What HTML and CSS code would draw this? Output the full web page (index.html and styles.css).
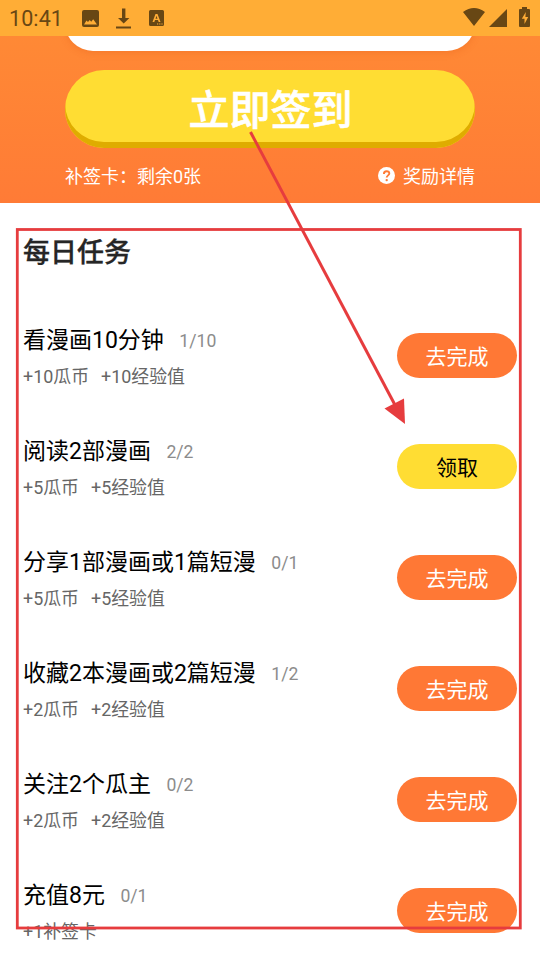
FILE: index.html
```html
<!DOCTYPE html>
<html lang="zh-CN">
<head>
<meta charset="utf-8">
<title>每日任务</title>
<link rel="stylesheet" href="styles.css">
</head>
<body>
<div class="screen">
  <header class="status">
    <span class="time">10:41</span>
    <svg class="status-icons" width="80" height="36" viewBox="0 0 80 36">
      <path fill-rule="evenodd" d="M4 10h13q2 0 2 2v13q0 2-2 2H4q-2 0-2-2V12q0-2 2-2zM4 24.500h13l-3.800-5.200-2 2.400-1.500-1.700-1.700 2-1.500-1.500z"/>
      <path d="M42 8.500h3.400V18h4L43.700 23.500 38 18h4zM36 26.500h15v2H36z"/>
    </svg>
    <svg class="app-icon" width="15" height="36" viewBox="0 0 15 36">
      <path fill-rule="evenodd" d="M1.500 10h12q1.500 0 1.500 1.500v13q0 1.500-1.500 1.500h-12q-1.500 0-1.500-1.500v-13q0-1.500 1.500-1.500zM6.500 14 3.500 22h1.800l.7-2h3l.7 2h1.800l-3-8zM7.500 15.800l1 2.900h-2zM8 23.500v1h1.200v-1zM10.200 23.500v1h1.200v-1zM12.400 23.500v1h1.200v-1z"/>
    </svg>
    <svg class="system-icons" width="70" height="36" viewBox="0 0 70 36">
      <path d="M0 12Q11 4 22 12L11 26zM44 9v18H26z"/>
      <path fill-rule="evenodd" d="M59 7h5v2h2q1 0 1 1v16q0 1-1 1h-9q-1 0-1-1V10q0-1 1-1h2zM62.800 12l-4 6.800h2.700V24l3.700-7h-2.800z"/>
    </svg>
  </header>
  <section class="hero">
    <div class="calendar-end"></div>
    <div class="sign-button">立即签到</div>
    <div class="hero-info">
      <span>补签卡：剩余0张</span>
      <span class="reward">
        <svg width="18" height="18" viewBox="0 0 18 18"><circle cx="8.500" cy="8.500" r="8.500" fill="#fff"/><path d="M5.900 6.900Q5.900 4.200 8.600 4.200t2.700 2.400c0 1.700-2.600 1.900-2.600 3.900" fill="none" stroke="#ff7b36" stroke-width="1.900"/><circle cx="8.700" cy="13.100" r="1.200" fill="#ff7b36"/></svg>
        奖励详情
      </span>
    </div>
  </section>
  <main class="tasks">
    <h1>每日任务</h1>
    <div class="task"><div><div class="name">看漫画10分钟<span class="count">1/10</span></div><div class="gain"><span>+10瓜币</span><span>+10经验值</span></div></div><div class="action">去完成</div></div>
    <div class="task"><div><div class="name">阅读2部漫画<span class="count">2/2</span></div><div class="gain"><span>+5瓜币</span><span>+5经验值</span></div></div><div class="action claim">领取</div></div>
    <div class="task"><div><div class="name">分享1部漫画或1篇短漫<span class="count">0/1</span></div><div class="gain"><span>+5瓜币</span><span>+5经验值</span></div></div><div class="action">去完成</div></div>
    <div class="task"><div><div class="name">收藏2本漫画或2篇短漫<span class="count">1/2</span></div><div class="gain"><span>+2瓜币</span><span>+2经验值</span></div></div><div class="action">去完成</div></div>
    <div class="task"><div><div class="name">关注2个瓜主<span class="count">0/2</span></div><div class="gain"><span>+2瓜币</span><span>+2经验值</span></div></div><div class="action">去完成</div></div>
    <div class="task"><div><div class="name">充值8元<span class="count">0/1</span></div><div class="gain"><span>+1补签卡</span></div></div><div class="action">去完成</div></div>
  </main>
  <svg class="annotation" width="540" height="960" viewBox="0 0 540 960">
    <rect x="17.300" y="229.500" width="503" height="698.500" fill="none" stroke="#e63c3e" stroke-width="2.800"/>
    <path d="M250.500 132 395 405" stroke="#e63c3e" stroke-width="3"/>
    <path d="M384.500 408.500 404 398.500 405 424z" fill="#e63c3e"/>
  </svg>
</div>
</body>
</html>
```
FILE: styles.css
```css
* { box-sizing: border-box; }
body { margin: 0; background: #fff; font-family: Roboto, "Noto Sans CJK SC", sans-serif; }
.screen { position: relative; width: 540px; height: 960px; overflow: hidden; }
.status { display: flex; height: 36px; background: #ffad36; color: #684714; }
.status svg { fill: #684714; flex: none; }
.time { width: 71px; margin-right: 9px; padding-left: 9px; font-size: 21.5px; line-height: 37px; letter-spacing: .1px; }
.status-icons { margin-right: -11px; }
.system-icons { margin-left: auto; margin-right: 7px; }
.hero { display: flow-root; overflow: hidden; height: 167px; padding: 0 65px; background: linear-gradient(#ff8935, #ff7b36); }
.calendar-end { height: 60px; background: #fff; border-radius: 28px; margin: -45px 0 0; box-shadow: 0 2px 7px rgba(220, 85, 20, .25); }
.sign-button { height: 78px; margin-top: 19px; padding: 3px 0 0 1px; border-radius: 39px; background: #ffdd33; box-shadow: inset 0 -6px #dfac00; color: #fff; font-size: 41px; font-weight: 500; -webkit-text-stroke: .6px #fff; line-height: 77px; text-align: center; }
.hero-info { display: flex; justify-content: space-between; margin-top: 15px; color: #fff; font-size: 18px; line-height: 28px; }
.reward { display: flex; align-items: center; gap: 7px; }
.reward svg { margin-top: -2px; }
.tasks { padding: 30px 23px 0; }
h1 { height: 67px; margin: 0; color: #262626; font-size: 27px; line-height: 40px; font-weight: 500; -webkit-text-stroke: .3px #262626; }
.task { display: flex; justify-content: space-between; height: 111px; padding-top: 22px; }
.name { padding-top: 1px; color: #000; font-size: 23px; line-height: 36px; white-space: nowrap; }
.count { position: relative; top: -1px; margin-left: 15.5px; color: #8c8c8c; font-size: 17.6px; }
.gain { display: flex; gap: 12px; margin-top: -1px; color: #666; font-size: 17.9px; line-height: 36px; }
.action { width: 120px; height: 45px; margin: 11px 0 0; border-radius: 22.5px; background: #ff7835; color: #fff; font-size: 21px; line-height: 48px; text-align: center; }
.claim { background: #ffdd33; color: #000; }
.annotation { position: absolute; inset: 0; pointer-events: none; }
```
